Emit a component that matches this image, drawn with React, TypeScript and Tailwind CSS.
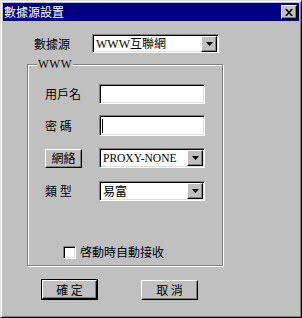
import React from 'react';

const cjk = "[font-family:'Noto_Sans_CJK_TC',sans-serif]";
const serif = "[font-family:'Liberation_Serif','Noto_Sans_CJK_TC',serif]";

const raised =
    'border border-t-white border-l-white border-b-black border-r-black bg-[#c0c0c0] shadow-[inset_-1px_-1px_0_#808080]';
const sunken =
    'border border-t-[#808080] border-l-[#808080] border-b-white border-r-white bg-white shadow-[inset_1px_1px_0_#000,inset_-1px_-1px_0_#dfdfdf]';

const DropArrow = () => (
    <div className={`${raised} w-[16px] h-[16px] flex items-center justify-center`}>
        <svg width="7" height="4" viewBox="0 0 7 4">
            <path d="M0 0h7L3.5 4z" fill="#000" />
        </svg>
    </div>
);

const Select = ({ children, className }: { children: React.ReactNode; className: string }) => (
    <div className={`${sunken} ${className} flex items-center justify-between pl-[3px] pr-[1px]`}>
        <span className="text-[12px] leading-[14px] text-black whitespace-nowrap">{children}</span>
        <DropArrow />
    </div>
);

const Label = ({ children, w }: { children: React.ReactNode; w: string }) => (
    <span className={`${cjk} ${w} text-[12px] leading-[14px] text-black whitespace-pre`}>{children}</span>
);

export default function App() {
    return (
        <div className="w-[302px] h-[318px] flex flex-col p-[2px] bg-[#c0c0c0] border border-t-[#dfdfdf] border-l-[#dfdfdf] border-b-black border-r-black shadow-[inset_1px_1px_0_#fff,inset_-1px_-1px_0_#808080]">
            {/* title bar */}
            <div className="h-[18px] bg-[#000080] flex items-center justify-between pl-[1px] pr-[2px]">
                <span className={`${cjk} text-[12px] leading-[14px] text-white`}>數據源設置</span>
                <div className={`${raised} w-[16px] h-[14px] flex items-center justify-center`}>
                    <svg width="8" height="7" viewBox="0 0 8 7">
                        <path d="M0 0h2l2 2.5L6 0h2L5 3.5 8 7H6L4 4.5 2 7H0l3-3.5z" fill="#000" />
                    </svg>
                </div>
            </div>

            {/* data source row */}
            <div className="mt-[13px] pl-[31px] flex items-center">
                <Label w="w-[58px]">數據源</Label>
                <Select className={`w-[127px] h-[19px] ${serif}`}>
                    <span className="text-[12px]">WWW</span>互聯網
                </Select>
            </div>

            {/* WWW group */}
            <div className="relative mt-[11px] ml-[24px] w-[196px] h-[202px] border border-[#808080] shadow-[1px_1px_0_#fff,inset_1px_1px_0_#fff] flex flex-col pl-[17px]">
                <span className={`absolute left-[9px] top-[-7px] px-[1px] bg-[#c0c0c0] ${serif} text-[11.5px] leading-[13px] tracking-[0.5px] text-black`}>
                    WWW
                </span>

                <div className="mt-[19px] flex items-center">
                    <Label w="w-[54px]">用戶名</Label>
                    <div className={`${sunken} w-[106px] h-[20px]`} />
                </div>

                <div className="mt-[11px] flex items-center">
                    <Label w="w-[54px]">密 碼</Label>
                    <div className={`${sunken} w-[106px] h-[21px] flex items-center pl-[2px]`}>
                        <span className="w-px h-[14px] bg-black" />
                    </div>
                </div>

                <div className="mt-[12px] flex items-center">
                    <div className="w-[54px]">
                        <button className={`${raised} ${cjk} w-[37px] h-[19px] flex items-center justify-center text-[12px] leading-[14px] text-black`}>
                            網絡
                        </button>
                    </div>
                    <Select className={`w-[106px] h-[20px] ${serif}`}>
                        <span className="text-[11.5px]">PROXY-NONE</span>
                    </Select>
                </div>

                <div className="mt-[13px] flex items-center">
                    <Label w="w-[54px]">類 型</Label>
                    <Select className={`w-[106px] h-[20px] ${cjk}`}>易富</Select>
                </div>

                <div className="mt-[44px] ml-[18px] flex items-center gap-[4px]">
                    <div className={`${sunken} w-[13px] h-[13px]`} />
                    <Label w="">啓動時自動接收</Label>
                </div>
            </div>

            {/* buttons */}
            <div className="mt-[13px] pl-[38px] flex gap-[43px]">
                <div className="border border-black">
                    <button className={`${raised} ${cjk} w-[55px] h-[19px] flex items-center justify-center text-[12px] leading-[14px] text-black whitespace-pre`}>
                        確 定
                    </button>
                </div>
                <button className={`${raised} ${cjk} mt-[1px] w-[57px] h-[20px] flex items-center justify-center text-[12px] leading-[14px] text-black whitespace-pre`}>
                    取 消
                </button>
            </div>
        </div>
    );
}
